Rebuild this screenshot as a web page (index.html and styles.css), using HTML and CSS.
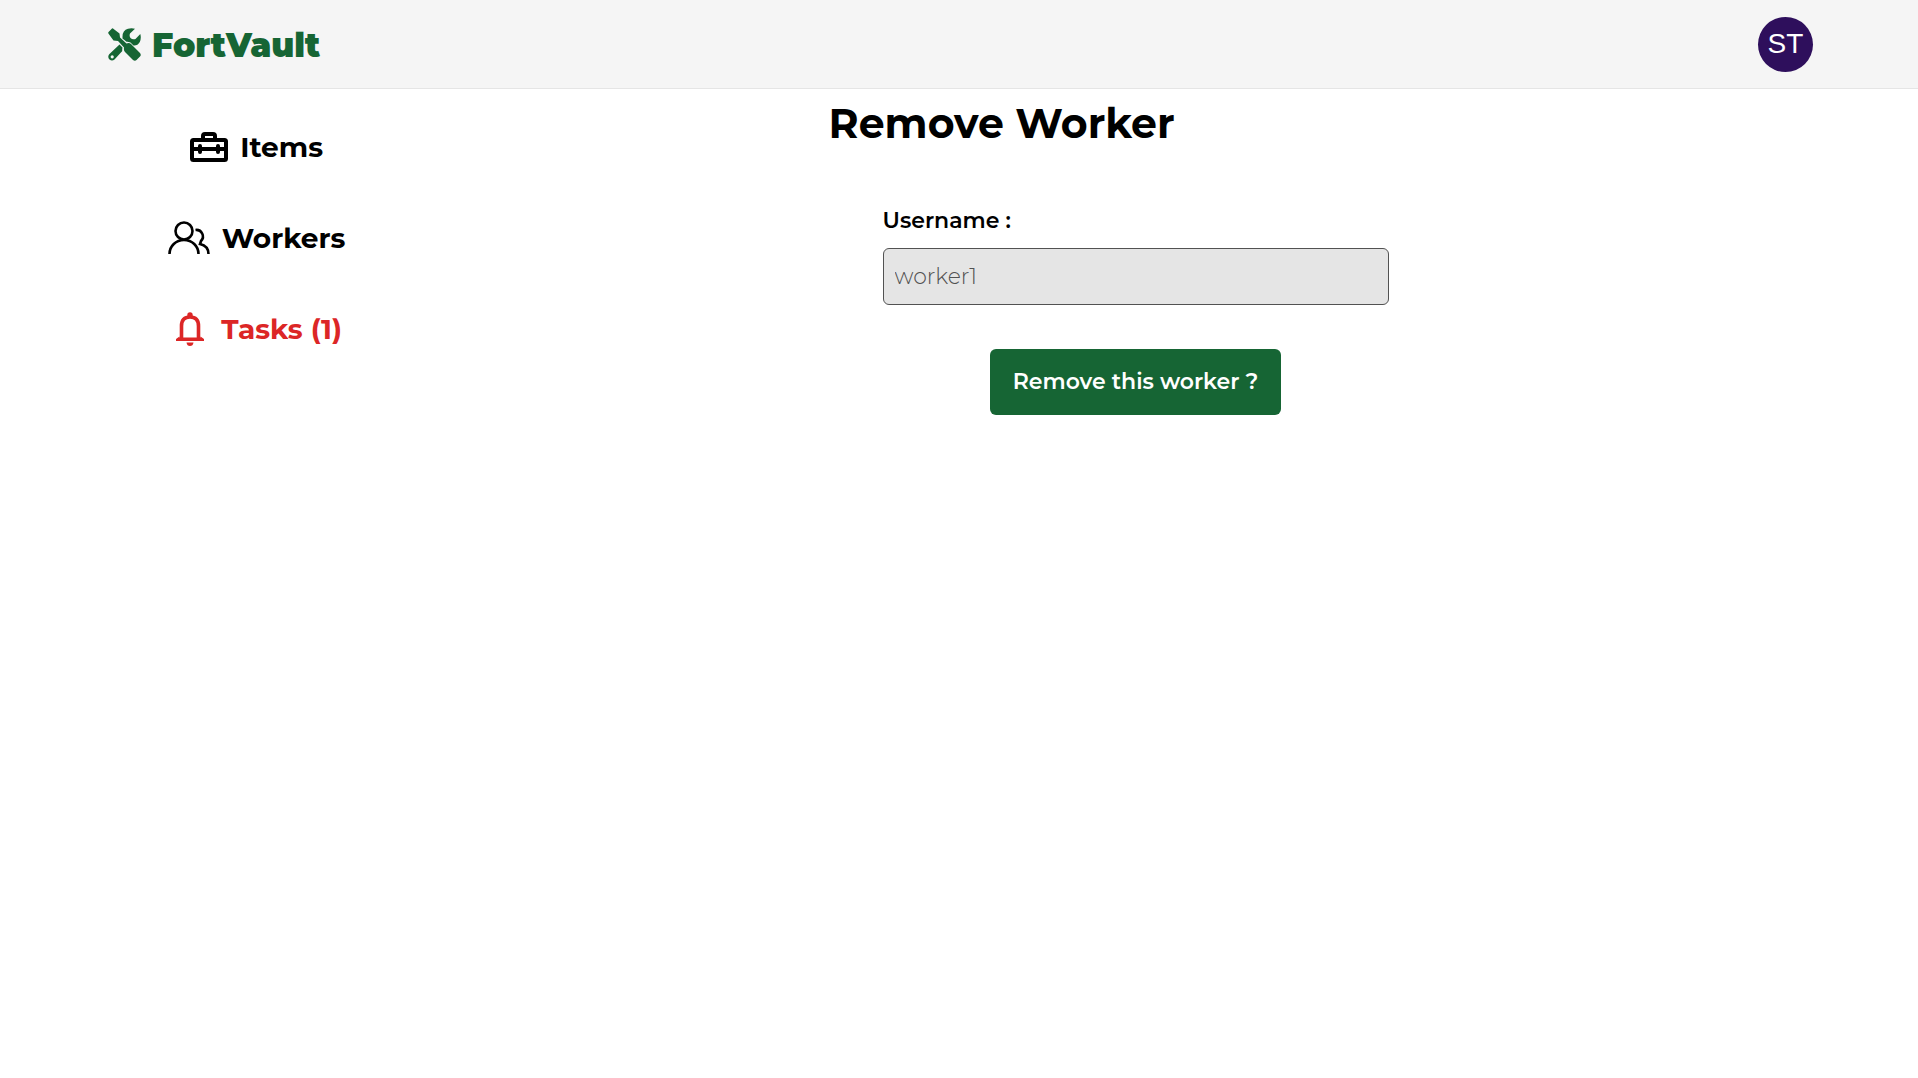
FILE: index.html
```html
<!DOCTYPE html>
<html lang="en">
<head>
<meta charset="utf-8">
<title>FortVault - Remove Worker</title>
<link rel="stylesheet" href="styles.css">
</head>
<body>
<header class="topbar">
  <a class="brand" href="#">
    <svg class="brand-icon" viewBox="0 0 33 33" aria-hidden="true">
      <path fill="currentColor" d="M.5 4 4 .4Q4.500 0 5 .4L11.500 5.500 12 9.500 18.500 15.500 20.500 15Q22 15 23 16L32 25Q33.500 27 32 28.500L28.500 32Q27 33.500 25 32L17 24Q15.500 22.500 16 19.500L10 13 5.500 12.500.4 5.500Q0 4.800.5 4Z"/>
      <path fill="currentColor" d="M14.500 8.500Q14.500 2.500 20 .8 23.500-.3 27 .8L22 5.500Q21 8 22.500 10 24.500 12 27.500 11L32.300 6Q33.500 10 31.800 14 29.500 18 25.500 17.500L22.500 14.500Q20 13.500 18.500 13.800L14.500 10.500Z"/>
      <path fill="currentColor" fill-rule="evenodd" d="M11.500 16.500 14.500 19.500Q14 22 14.300 23L6.500 31.500Q4 33.500 1.500 31.500-.8 29 1.200 26.300ZM4.200 27.200A1.500 1.500 0 1 0 4.200 30.400 1.500 1.500 0 1 0 4.200 27.200Z"/>
    </svg>
    <span>FortVault</span>
  </a>
  <button class="avatar" type="button">ST</button>
</header>
<div class="layout">
  <nav class="sidebar">
    <a class="nav-link" href="#">
      <svg class="nav-icon icon-box" viewBox="0 0 38 30" fill="none" stroke="currentColor" stroke-width="4" aria-hidden="true">
        <rect x="2" y="8" width="34" height="20" rx="1.500"/>
        <path d="M13 8V4Q13 2 15 2H23Q25 2 25 4V8M2 17H36"/>
        <path d="M10 14V20M28 14V20" stroke-linecap="round"/>
      </svg>
      <span>Items</span>
    </a>
    <a class="nav-link" href="#">
      <svg class="nav-icon icon-people" viewBox="0 0 42 34" fill="none" stroke="currentColor" stroke-width="2.600" aria-hidden="true">
        <circle cx="16" cy="10" r="8.500"/>
        <path d="M1.500 33C1.500 25 8 19 16 19S30.500 25 30.500 33M27.500 9A6.500 6.500 0 0 1 33 20L32 23Q40.500 25 40.500 33"/>
      </svg>
      <span>Workers</span>
    </a>
    <a class="nav-link alert" href="#">
      <svg class="nav-icon icon-bell" viewBox="-5 0 38 34" aria-hidden="true">
        <path fill="none" stroke="currentColor" stroke-width="3.600" d="M5.500 27V14Q5.500 5 14 5T22.500 14V27"/>
        <path fill="currentColor" d="M11.300 3A2.700 2.700 0 0 1 16.700 3V5H11.300ZM0 29V27L3.500 24.500V25.500H24.500V24.500L28 27V29ZM10.500 30.500H17.500Q17 34 14 34T10.500 30.500Z"/>
      </svg>
      <span>Tasks (1)</span>
    </a>
  </nav>
  <main class="content">
    <h1 class="title">Remove Worker</h1>
    <form class="form">
      <label class="label" for="username">Username :</label>
      <input class="field" id="username" type="text" value="worker1" disabled>
      <button class="submit" type="submit">Remove this worker ?</button>
    </form>
  </main>
</div>
</body>
</html>
```
FILE: styles.css
```css
* {
  box-sizing: border-box;
}

body {
  margin: 0;
  background: #fff;
  color: #000;
  font-family: Montserrat, Inter, sans-serif;
}

a {
  color: inherit;
  text-decoration: none;
}

.topbar {
  display: flex;
  align-items: center;
  justify-content: space-between;
  padding: 17px 105px 16px 108px;
  border-bottom: 1px solid #e5e5e5;
  background: #f5f5f5;
}

.brand {
  display: flex;
  align-items: center;
  gap: 11px;
  color: #166534;
  font-size: 33px;
  font-weight: 900;
  line-height: 40px;
}

.brand-icon {
  width: 33px;
  height: 33px;
}

.avatar {
  width: 55px;
  height: 55px;
  padding: 0 0 2px;
  border: 0;
  border-radius: 50%;
  background: #2e0f5c;
  color: #fff;
  font-family: "Liberation Sans", sans-serif;
  font-size: 28px;
}

.layout {
  display: grid;
  grid-template-columns: 19fr 46fr 6fr;
}

.sidebar {
  display: flex;
  flex-direction: column;
  align-items: center;
  gap: 51px;
  padding-top: 38px;
}

.nav-link {
  display: flex;
  align-items: center;
  gap: 12px;
  font-size: 28px;
  font-weight: 700;
  line-height: 40px;
}

.alert {
  color: #dc2626;
}

.icon-box {
  width: 38px;
  height: 30px;
}

.icon-people {
  width: 42px;
  height: 34px;
}

.icon-bell {
  width: 38px;
  height: 34px;
}

.content {
  width: 100%;
  max-width: 612px;
  margin: 0 auto;
}

.title {
  margin: 9px 0 59px;
  font-size: 41px;
  font-weight: 700;
  line-height: 50px;
}

.form {
  display: flex;
  flex-direction: column;
  margin: 0 52px 0 54px;
}

.label {
  font-size: 22px;
  font-weight: 600;
  line-height: 28px;
}

.field {
  height: 57px;
  margin: 13px 0 44px;
  padding: 0 11px;
  border: 1px solid #525252;
  border-radius: 6px;
  background: #e5e5e5;
  color: #525252;
  font-family: inherit;
  font-size: 22px;
  font-weight: 300;
}

.submit {
  align-self: center;
  padding: 18px 23px;
  border: 0;
  border-radius: 6px;
  background: #166534;
  color: #fff;
  font-family: inherit;
  font-size: 22px;
  font-weight: 600;
  line-height: 30px;
}
```
